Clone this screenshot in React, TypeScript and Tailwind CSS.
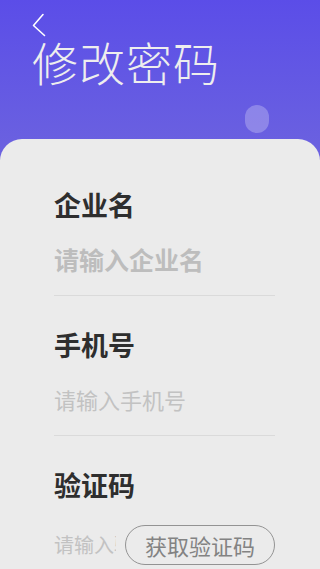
const cjk = { fontFamily: '"Noto Sans CJK SC", "Noto Sans", sans-serif' };

function Field({ label, children, divider = true }: { label: string; children: React.ReactNode; divider?: boolean }) {
  return (
    <div className="flex flex-col">
      <div className="text-[27px] font-bold leading-none text-[#2e2e2e]">{label}</div>
      <div className="mt-[28px] flex h-[26px] items-center">{children}</div>
      {divider && <div className="mt-[23px] h-px bg-[#dadada]" />}
    </div>
  );
}

export default function App() {
  return (
    <div className="relative h-[569px] w-[320px] overflow-hidden bg-[#ebebeb]" style={cjk}>
      <header className="relative h-[160px] bg-gradient-to-b from-[#5b4de8] to-[#6c62df] px-[32px] pt-[13px]">
        <svg width="14" height="24" viewBox="0 0 14 24" fill="none" className="text-white">
          <path d="M11 1.5 L1.5 12.5 L12.5 22.5" stroke="currentColor" strokeWidth="1.6" strokeLinecap="round" strokeLinejoin="round" />
        </svg>
        <h1 className="mt-[1px] text-[46px] font-light leading-none tracking-[1px] text-[#eeeeee]">修改密码</h1>
        <span className="absolute left-[245px] top-[105px] h-[28px] w-[24px] rounded-full bg-white/25" />
      </header>

      <main className="absolute inset-x-0 top-[139px] bottom-0 rounded-t-[22px] bg-[#ebebeb] pl-[54px] pr-[45px] pt-[52px]">
        <div className="flex flex-col gap-[35px]">
          <Field label="企业名">
            <span className="text-[25px] font-bold leading-none text-[#bdbdbd]">请输入企业名</span>
          </Field>
          <Field label="手机号">
            <span className="text-[22px] leading-none text-[#c2c2c2]">请输入手机号</span>
          </Field>
          <div className="flex flex-col">
            <div className="text-[27px] font-bold leading-none text-[#2e2e2e]">验证码</div>
            <div className="mt-[27px] flex items-center gap-[9px]">
              <div className="w-[62px] shrink-0 overflow-hidden whitespace-nowrap text-[20px] leading-none text-[#c2c2c2]">请输入验证码</div>
              <button className="flex h-[40px] w-[150px] shrink-0 items-center justify-center rounded-full border-[1.5px] border-[#939393] text-[22px] leading-none text-[#838383]">
                获取验证码
              </button>
            </div>
          </div>
        </div>
      </main>
    </div>
  );
}
